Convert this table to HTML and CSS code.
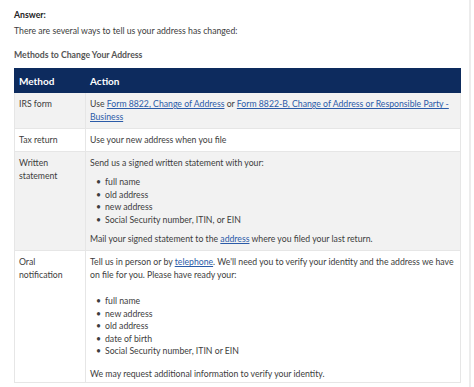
FILE: index.html
```html
<!DOCTYPE html>
<html>
<head>
  <meta charset="UTF-8">
  <title>Answer - Change of Address</title>
  <link rel="stylesheet" href="styles.css">
</head>
<body>

<div class="page">
  <div class="answer">
    <p class="answer-label">Answer:</p>
    <p class="intro">There are several ways to tell us your address has changed:</p>
    <p class="caption">Methods to Change Your Address</p>

    <table class="methods">
      <thead>
        <tr>
          <th class="col-method">Method</th>
          <th>Action</th>
        </tr>
      </thead>
      <tbody>
        <tr class="shade">
          <td>IRS form</td>
          <td>Use <a href="#">Form 8822, Change of Address</a> or <a href="#">Form 8822-B, Change of Address or Responsible Party - Business</a></td>
        </tr>
        <tr>
          <td>Tax return</td>
          <td>Use your new address when you file</td>
        </tr>
        <tr class="shade">
          <td>Written statement</td>
          <td>
            <p>Send us a signed written statement with your:</p>
            <ul>
              <li>full name</li>
              <li>old address</li>
              <li>new address</li>
              <li>Social Security number, ITIN, or EIN</li>
            </ul>
            <p>Mail your signed statement to the <a href="#">address</a> where you filed your last return.</p>
          </td>
        </tr>
        <tr class="last">
          <td>Oral notification</td>
          <td>
            <p class="lead">Tell us in person or by <a href="#">telephone</a>. We'll need you to verify your identity and the address we have on file for you. Please have ready your:</p>
            <ul>
              <li>full name</li>
              <li>new address</li>
              <li>old address</li>
              <li>date of birth</li>
              <li>Social Security number, ITIN or EIN</li>
            </ul>
            <p class="tail">We may request additional information to verify your identity.</p>
          </td>
        </tr>
      </tbody>
    </table>
  </div>
  <div class="rail"></div>
</div>

</body>
</html>
```

FILE: styles.css
```css
/* --- RESET & BASE --- */
* {
  margin: 0;
  padding: 0;
  box-sizing: border-box;
}
html, body {
  height: 100%;
  background: #fff;
  font-family: 'Lato', 'Liberation Sans', sans-serif;
  font-size: 8.7px;
  line-height: 12px;
  color: #3d3d3d;
  overflow: hidden;
}

/* --- PAGE --- */
.page {
  display: flex;
  height: 100%;
}
.answer {
  width: 461px;
  padding: 9px 0 0 14px;
}
.rail {
  width: 2px;
  margin-left: 8px;
  background: #ececec;
}

.answer-label {
  font-weight: bold;
  color: #222;
}
.intro {
  margin-top: 4px;
}
.caption {
  margin-top: 12px;
  font-weight: bold;
  color: #555;
}

/* --- TABLE --- */
.methods {
  width: 100%;
  margin-top: 7px;
  border-collapse: collapse;
}
.methods th {
  background: #0d2b5e;
  color: #fff;
  font-size: 10px;
  font-weight: bold;
  text-align: left;
  padding: 6px 4px 5px 4px;
  border: 1px solid #0d2b5e;
}
.methods .col-method {
  width: 71px;
}
.methods td {
  vertical-align: top;
  line-height: 13px;
  padding: 4px 4px 5px 4px;
  border: 1px solid #e6e6e6;
}
.methods tr.shade td {
  background: #f2f2f2;
}
.methods tr.last td {
  padding-bottom: 2px;
}
.methods td p + ul {
  margin-top: 7px;
}
.methods td p.lead + ul {
  margin-top: 14px;
}
.methods td ul + p {
  margin-top: 6px;
}
.methods td ul + p.tail {
  margin-top: 9px;
}
.methods li {
  line-height: 12.5px;
}
.methods ul {
  list-style: none;
  padding-left: 6px;
}
.methods li::before {
  content: "\2022";
  display: inline-block;
  width: 9px;
}

a {
  color: #2b5ba8;
  text-decoration: underline;
}
```
